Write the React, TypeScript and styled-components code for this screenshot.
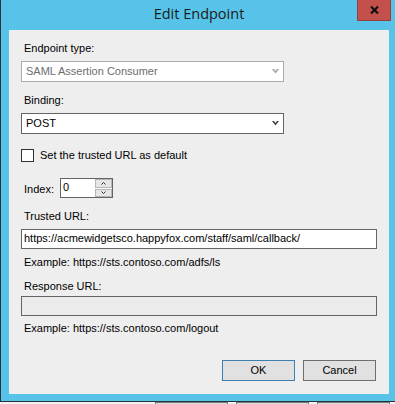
import React from 'react';
import styled, { createGlobalStyle } from 'styled-components';

const GlobalStyle = createGlobalStyle`
  html, body {
    margin: 0;
    padding: 0;
    background: #f2f2f2;
    overflow: hidden;
  }
  body {
    font-family: "Liberation Sans", Arial, sans-serif;
    font-size: 11px;
    color: #000;
  }
`

const Window = styled.div`
  width: 395px;
  height: 402px;
  box-sizing: border-box;
  background: #57c3e9;
  border-left: 1px solid #25343d;
  border-bottom: 1px solid #25343d;
  display: flex;
  flex-direction: column;
`

const TitleBar = styled.div`
  height: 30px;
  display: grid;
  grid-template-columns: 1fr auto 1fr;
  align-items: start;
`

const Title = styled.div`
  grid-column: 2;
  font-family: "Open Sans", "Noto Sans", sans-serif;
  font-size: 14.5px;
  line-height: 20px;
  padding: 4px 0 0 2px;
  color: #1b1b1b;
`

const CloseButton = styled.div`
  grid-column: 3;
  justify-self: end;
  margin-right: 4px;
  width: 34px;
  height: 21px;
  box-sizing: border-box;
  background: #c4504b;
  border: 1px solid #94403b;
  border-top: none;
  display: flex;
  align-items: center;
  justify-content: center;
`

const Client = styled.div`
  flex: 1;
  margin: 0 6px 7px 8px;
  background: #eeeeee;
  display: flex;
  flex-direction: column;
  padding: 0 12px;
`

const Label = styled.div<{ $top: number }>`
  margin-top: ${p => p.$top}px;
  padding-left: 3px;
  line-height: 13px;
  height: 13px;
  white-space: nowrap;
`

const Combo = styled.div<{ $top: number; $disabled?: boolean }>`
  margin-top: ${p => p.$top}px;
  width: 263px;
  height: 21px;
  box-sizing: border-box;
  background: #fff;
  border: 1px solid ${p => (p.$disabled ? '#acacac' : '#646464')};
  color: ${p => (p.$disabled ? '#6d6d6d' : '#000')};
  display: flex;
  align-items: center;
  justify-content: space-between;
  padding: 0 4px 0 4px;
  line-height: 13px;
`

const CheckRow = styled.div<{ $top: number }>`
  margin-top: ${p => p.$top}px;
  height: 13px;
  display: flex;
  align-items: center;
  gap: 6px;
  line-height: 13px;
`

const CheckBox = styled.div`
  width: 13px;
  height: 13px;
  box-sizing: border-box;
  background: #fff;
  border: 1px solid #333;
`

const IndexRow = styled.div<{ $top: number }>`
  margin-top: ${p => p.$top}px;
  height: 20px;
  display: flex;
  align-items: center;
  gap: 6px;
  padding-left: 3px;
  line-height: 13px;
`

const IndexLabel = styled.span`
  padding-top: 3px;
`

const Spin = styled.div`
  width: 53px;
  height: 20px;
  box-sizing: border-box;
  background: #fff;
  border: 1px solid #646464;
  display: flex;
  justify-content: space-between;
`

const SpinValue = styled.span`
  padding: 2px 0 0 2px;
  line-height: 13px;
`

const SpinButtons = styled.div`
  width: 17px;
  display: flex;
  flex-direction: column;
  gap: 1px;
`

const SpinButton = styled.div`
  flex: 1;
  background: #e6e6e6;
  border: 1px solid #b5b5b5;
  display: flex;
  align-items: center;
  justify-content: center;
`

const TextBox = styled.div<{ $top: number; $disabled?: boolean }>`
  margin-top: ${p => p.$top}px;
  width: 356px;
  height: 20px;
  box-sizing: border-box;
  background: ${p => (p.$disabled ? '#ebebeb' : '#fff')};
  border: 1px solid #646464;
  padding: 2px 0 0 2px;
  line-height: 13px;
  white-space: nowrap;
  overflow: hidden;
`

const ButtonRow = styled.div<{ $top: number }>`
  margin-top: ${p => p.$top}px;
  display: flex;
  justify-content: flex-end;
  gap: 8px;
  padding-right: 1px;
`

const Button = styled.div<{ $default?: boolean }>`
  width: 73px;
  height: 21px;
  box-sizing: border-box;
  background: #e1e1e1;
  border: 1px solid ${p => (p.$default ? '#3c7fb1' : '#6f6f6f')};
  display: flex;
  align-items: center;
  justify-content: center;
  line-height: 13px;
`

const Desktop = styled.div`
  height: 2px;
  display: flex;
  gap: 8px;
  padding-left: 155px;
`

const BehindButton = styled.div`
  width: 73px;
  box-sizing: border-box;
  background: #dadada;
  border: 1px solid #7a7a7a;
  border-bottom: none;
`

const Chevron = ({ color }: { color: string }) => (
  <svg width="7" height="5" viewBox="0 0 7 5">
    <polygon points="0,0 2,0 3.5,2 5,0 7,0 3.5,4.5" fill={color} />
  </svg>
)

const SmallArrow = ({ up }: { up?: boolean }) => (
  <svg width="5" height="3" viewBox="0 0 5 3">
    <polyline
      points={up ? '0.5,2.5 2.5,0.5 4.5,2.5' : '0.5,0.5 2.5,2.5 4.5,0.5'}
      fill="none"
      stroke="#333"
      strokeWidth="1"
    />
  </svg>
)

const CloseGlyph = () => (
  <svg width="9" height="8" viewBox="0 0 9 8">
    <path d="M1 0.5 L8 7.5 M8 0.5 L1 7.5" stroke="#111" strokeWidth="2.2" />
  </svg>
)

const App: React.FC = () => (
  <>
    <GlobalStyle />
    <Window>
      <TitleBar>
        <Title>Edit Endpoint</Title>
        <CloseButton>
          <CloseGlyph />
        </CloseButton>
      </TitleBar>
      <Client>
        <Label $top={12}>Endpoint type:</Label>
        <Combo $top={6} $disabled>
          <span>SAML Assertion Consumer</span>
          <Chevron color="#a0a0a0" />
        </Combo>
        <Label $top={12}>Binding:</Label>
        <Combo $top={6}>
          <span>POST</span>
          <Chevron color="#444" />
        </Combo>
        <CheckRow $top={15}>
          <CheckBox />
          <span>Set the trusted URL as default</span>
        </CheckRow>
        <IndexRow $top={16}>
          <IndexLabel>Index:</IndexLabel>
          <Spin>
            <SpinValue>0</SpinValue>
            <SpinButtons>
              <SpinButton>
                <SmallArrow up />
              </SpinButton>
              <SpinButton>
                <SmallArrow />
              </SpinButton>
            </SpinButtons>
          </Spin>
        </IndexRow>
        <Label $top={12}>Trusted URL:</Label>
        <TextBox $top={6}>https://acmewidgetsco.happyfox.com/staff/saml/callback/</TextBox>
        <Label $top={7}>Example: https://sts.contoso.com/adfs/ls</Label>
        <Label $top={11}>Response URL:</Label>
        <TextBox $top={3} $disabled />
        <Label $top={6}>Example: https://sts.contoso.com/logout</Label>
        <ButtonRow $top={25}>
          <Button $default>OK</Button>
          <Button>Cancel</Button>
        </ButtonRow>
      </Client>
    </Window>
    <Desktop>
      <BehindButton />
      <BehindButton />
      <BehindButton />
    </Desktop>
  </>
)

export default App
